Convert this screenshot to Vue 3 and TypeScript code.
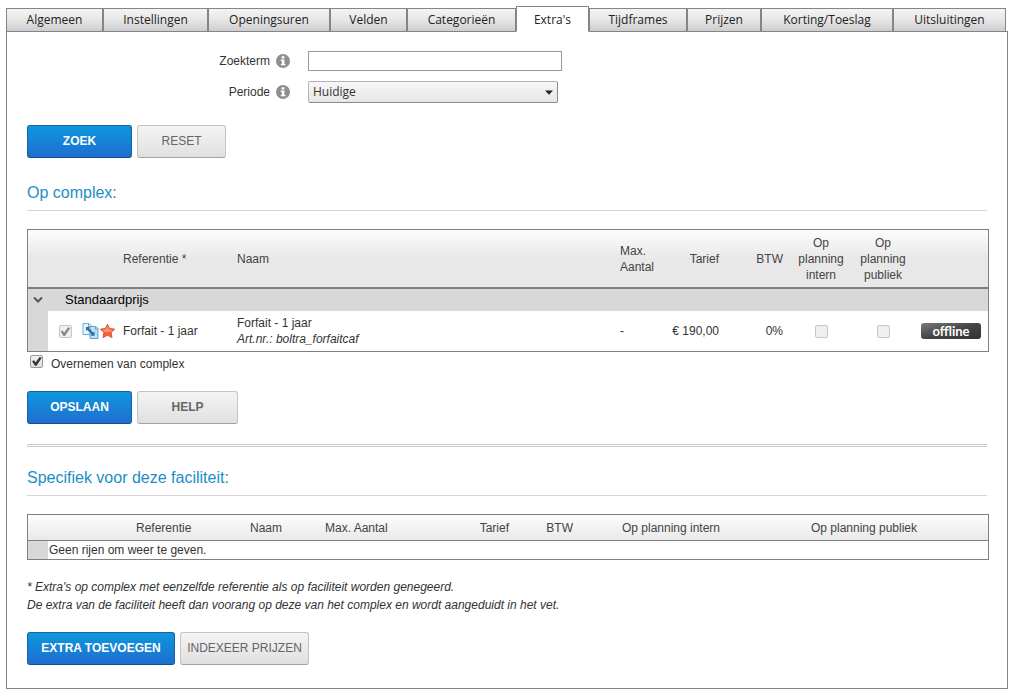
<script setup lang="ts">
import { ref } from 'vue'

interface Tab {
  id: string
  label: string
}

const tabs: Tab[] = [
  { id: 'algemeen', label: 'Algemeen' },
  { id: 'instellingen', label: 'Instellingen' },
  { id: 'openingsuren', label: 'Openingsuren' },
  { id: 'velden', label: 'Velden' },
  { id: 'categorieen', label: 'Categorieën' },
  { id: 'extras', label: "Extra's" },
  { id: 'tijdframes', label: 'Tijdframes' },
  { id: 'prijzen', label: 'Prijzen' },
  { id: 'korting', label: 'Korting/Toeslag' },
  { id: 'uitsluitingen', label: 'Uitsluitingen' },
]

const activeTab = ref<string>('extras')
const term = ref<string>('')
const period = ref<string>('Huidige')
const expanded = ref<boolean>(true)
const inherit = ref<boolean>(true)
</script>

<template>
  <div class="page">
    <nav class="tabs">
      <button
        v-for="tab in tabs"
        :key="tab.id"
        type="button"
        class="tab"
        :class="{ active: tab.id === activeTab }"
        @click="activeTab = tab.id"
      >
        {{ tab.label }}
      </button>
    </nav>

    <main class="panel">
      <form class="search" @submit.prevent>
        <div class="field">
          <label for="term">Zoekterm</label>
          <svg class="info" viewBox="0 0 14 14" aria-hidden="true">
            <circle cx="7" cy="7" r="7" fill="#8f8f8f" />
            <path d="M5.6 2.3h2.8v2.2H5.6zM4.8 5.5h3.6v4.4h1v1.4H4.8V9.9h1V6.9h-1z" fill="#fff" />
          </svg>
          <input id="term" v-model="term" class="text" type="text" />
        </div>
        <div class="field">
          <label for="period">Periode</label>
          <svg class="info" viewBox="0 0 14 14" aria-hidden="true">
            <circle cx="7" cy="7" r="7" fill="#8f8f8f" />
            <path d="M5.6 2.3h2.8v2.2H5.6zM4.8 5.5h3.6v4.4h1v1.4H4.8V9.9h1V6.9h-1z" fill="#fff" />
          </svg>
          <div class="select">
            <select id="period" v-model="period">
              <option>Huidige</option>
            </select>
            <svg class="arrow" viewBox="0 0 8 5" aria-hidden="true">
              <path d="M0 0.5h8L4 4.8z" fill="#222" />
            </svg>
          </div>
        </div>
        <div class="actions">
          <button type="submit" class="btn primary medium">ZOEK</button>
          <button type="reset" class="btn small">RESET</button>
        </div>
      </form>

      <section class="complex">
        <h2>Op complex:</h2>
        <table class="grid main-grid">
          <colgroup>
            <col class="c-gutter" />
            <col class="c-icon" />
            <col class="c-icon" />
            <col class="c-ref" />
            <col />
            <col class="c-max" />
            <col class="c-mid" />
            <col class="c-btw" />
            <col class="c-mid" />
            <col class="c-mid" />
            <col class="c-status" />
          </colgroup>
          <thead>
            <tr>
              <th></th>
              <th></th>
              <th></th>
              <th>Referentie *</th>
              <th>Naam</th>
              <th>Max. Aantal</th>
              <th class="right">Tarief</th>
              <th class="right">BTW</th>
              <th class="center">Op planning intern</th>
              <th class="center">Op planning publiek</th>
              <th></th>
            </tr>
          </thead>
          <tbody>
            <tr class="group">
              <td class="gutter">
                <button type="button" class="toggle" aria-label="Groep" @click="expanded = !expanded">
                  <svg viewBox="0 0 10 8" aria-hidden="true">
                    <path d="M1 1.5 5 5.5 9 1.5" fill="none" stroke="#555" stroke-width="2" />
                  </svg>
                </button>
              </td>
              <td colspan="10" class="group-name">Standaardprijs</td>
            </tr>
            <tr v-if="expanded" class="item">
              <td class="gutter"></td>
              <td class="center"><input type="checkbox" checked disabled aria-label="Actief" /></td>
              <td class="icons">
                <div class="icon-pair">
                  <svg viewBox="0 0 16 16" aria-hidden="true">
                    <path d="M0.5 0.5h6l2.5 2.5v8.5H0.5z" fill="#e6f3fa" stroke="#6fb0d2" />
                    <path d="M7.5 3.5h6l2 2v10h-8z" fill="#bfe0f0" stroke="#5fa2c8" />
                    <path d="M6 0.8v2.7h2.7M13 3.8v2.4h2.4" fill="none" stroke="#5fa2c8" />
                    <path d="M3.5 4h4L6.4 5.1l4.4 4.6 1.3-1.2v4.3H7.8l1.4-1.4-4.5-4.6L3.5 8z" fill="#2b70a2" />
                  </svg>
                  <svg viewBox="0 0 16 16" aria-hidden="true">
                    <path
                      d="M8 1.2 10.2 5.6l4.9.5-3.5 3.5.9 5L8 12.3l-4.5 2.3.9-5L.9 6.1l4.9-.5z"
                      fill="#f2603f"
                      stroke="#e0553a"
                      stroke-linejoin="round"
                    />
                    <path d="M8 2.8 9.6 6.4l3.6.4-2.7 2.1H5.3L2.9 6.8l3.5-.4z" fill="#fa9479" />
                  </svg>
                </div>
              </td>
              <td>Forfait - 1 jaar</td>
              <td>Forfait - 1 jaar<br /><em>Art.nr.: boltra_forfaitcaf</em></td>
              <td>-</td>
              <td class="right">€ 190,00</td>
              <td class="right">0%</td>
              <td class="center"><input type="checkbox" disabled aria-label="Op planning intern" /></td>
              <td class="center"><input type="checkbox" disabled aria-label="Op planning publiek" /></td>
              <td class="status"><button type="button" class="offline">offline</button></td>
            </tr>
          </tbody>
        </table>
        <label class="inherit">
          <input v-model="inherit" type="checkbox" />
          <span>Overnemen van complex</span>
        </label>
        <div class="actions">
          <button type="button" class="btn primary medium">OPSLAAN</button>
          <button type="button" class="btn strong help">HELP</button>
        </div>
      </section>

      <section class="specific">
        <h2>Specifiek voor deze faciliteit:</h2>
        <table class="grid empty-grid">
          <colgroup>
            <col class="c-gutter" />
            <col class="e-blank" />
            <col class="c-ref" />
            <col class="e-name" />
            <col class="e-max" />
            <col class="c-ref" />
            <col class="c-btw" />
            <col class="e-intern" />
            <col />
            <col class="e-end" />
          </colgroup>
          <thead>
            <tr>
              <th></th>
              <th></th>
              <th>Referentie</th>
              <th>Naam</th>
              <th>Max. Aantal</th>
              <th class="right">Tarief</th>
              <th class="right">BTW</th>
              <th class="center">Op planning intern</th>
              <th class="center">Op planning publiek</th>
              <th></th>
            </tr>
          </thead>
          <tbody>
            <tr>
              <td class="gutter"></td>
              <td colspan="9" class="empty">Geen rijen om weer te geven.</td>
            </tr>
          </tbody>
        </table>
        <p class="note">
          * Extra's op complex met eenzelfde referentie als op faciliteit worden genegeerd.<br />
          De extra van de faciliteit heeft dan voorang op deze van het complex en wordt aangeduidt in het vet.
        </p>
        <div class="actions">
          <button type="button" class="btn primary wide">EXTRA TOEVOEGEN</button>
          <button type="button" class="btn index">INDEXEER PRIJZEN</button>
        </div>
      </section>
    </main>
  </div>
</template>

<style>
body {
  margin: 0;
  background: #fff;
}
</style>

<style scoped>
.page {
  padding: 6px 8px 7px 6px;
  font: 12px/16px "Liberation Sans", Arial, sans-serif;
  color: #333;
}
.page * {
  box-sizing: border-box;
}
button,
input,
select {
  font: inherit;
  color: inherit;
  margin: 0;
}

.tabs {
  position: relative;
  display: grid;
  grid-template-columns: 97fr 105fr 122fr 77fr 109fr 73fr 98fr 74fr 132fr 113fr;
  align-items: end;
  height: 26px;
  margin-bottom: -1px;
  margin-right: 2px;
}
.tab {
  height: 24px;
  padding: 0;
  border: 1px solid #84858a;
  background: linear-gradient(#f4f4f4, #e6e6e6 50%, #cdcdcf);
  font: 12px/20px "Open Sans", "Noto Sans", sans-serif;
  color: #222;
  white-space: nowrap;
}
.tab.active {
  height: 26px;
  padding-top: 2px;
  border-bottom-color: #fff;
  background: #fff;
}

.panel {
  border: 1px solid #84858a;
  padding: 19px 18px 23px 20px;
}
.field {
  display: grid;
  grid-template-columns: 243px 14px 254px;
  column-gap: 6px;
  align-items: center;
  height: 20px;
}
.field + .field {
  margin-top: 10px;
}
.field label {
  text-align: right;
}
.info {
  width: 14px;
  height: 14px;
}
.text,
.select {
  margin-left: 12px;
}
.text {
  width: 254px;
  height: 20px;
  padding: 0 4px;
  border: 1px solid #9a9a9a;
  background: #fff;
}
.select {
  display: grid;
  align-items: center;
  width: 250px;
  height: 22px;
}
.select > * {
  grid-area: 1 / 1;
}
.select select {
  appearance: none;
  width: 100%;
  height: 22px;
  padding: 0 4px;
  border: 1px solid #b4b4b4;
  border-bottom-color: #888;
  border-right-color: #888;
  border-radius: 2px;
  background: linear-gradient(#f7f7f7, #e6e6e6);
  font: 12px/20px "Open Sans", "Noto Sans", sans-serif;
}
.arrow {
  width: 8px;
  height: 5px;
  justify-self: end;
  margin-right: 5px;
  pointer-events: none;
}

.actions {
  display: flex;
  gap: 5px;
}
.search .actions {
  margin-top: 24px;
}
.btn {
  height: 33px;
  padding: 0 0 2px;
  border: 1px solid #c4c4c4;
  border-bottom-color: #a2a2a2;
  border-radius: 3px;
  background: linear-gradient(#f4f4f4, #e0e0e0);
  font-size: 12px;
  color: #666;
  white-space: nowrap;
}
.btn.strong {
  font-weight: bold;
}
.btn.primary {
  border-color: #1763a4;
  border-bottom-color: #134d93;
  background: linear-gradient(#0d97dd, #1f6ed0);
  color: #fff;
  font-weight: bold;
}
.medium {
  width: 105px;
}
.small {
  width: 89px;
}
.help {
  width: 101px;
}
.wide {
  width: 148px;
}
.index {
  width: 129px;
}

h2 {
  margin: 0 2px 18px 0;
  padding-bottom: 7px;
  border-bottom: 1px solid #d6d6d6;
  font-size: 16px;
  line-height: 20px;
  font-weight: normal;
  color: #1b8ec6;
}
.complex {
  margin-top: 25px;
}

.grid {
  width: 100%;
  table-layout: fixed;
  border: 1px solid #808080;
  border-spacing: 0;
}
.grid th {
  padding: 0 7px;
  border-bottom: 1px solid #808080;
  text-align: left;
  font-weight: normal;
  color: #444;
}
.grid td {
  padding: 0 7px;
}
.grid .right {
  text-align: right;
}
.grid .center {
  text-align: center;
}
.main-grid thead {
  background: linear-gradient(#fcfcfc, #e8e8e8 50%, #e8e8e8);
}
.main-grid th {
  height: 59px;
  border-bottom-width: 2px;
}
.empty-grid thead {
  background: linear-gradient(#fdfdfd, #e8e8e8);
}
.empty-grid th {
  height: 26px;
}
.c-gutter {
  width: 20px;
}
.c-icon {
  width: 34px;
}
.c-ref {
  width: 114px;
}
.c-max {
  width: 51px;
}
.c-mid {
  width: 62px;
}
.c-btw {
  width: 64px;
}
.c-status {
  width: 74px;
}
.e-blank {
  width: 81px;
}
.e-name {
  width: 75px;
}
.e-max {
  width: 84px;
}
.e-intern {
  width: 182px;
}
.e-end {
  width: 22px;
}
.group td {
  height: 22px;
  background: #d8d8d8;
}
.grid td.group-name {
  padding-left: 17px;
  font-size: 13px;
  color: #000;
}
.grid td.gutter {
  padding: 0;
  background: #d8d8d8;
}
.toggle {
  display: flex;
  align-items: center;
  justify-content: center;
  width: 100%;
  height: 22px;
  padding: 0;
  border: 0;
  background: none;
}
.toggle svg {
  width: 10px;
  height: 8px;
}
.item td {
  height: 40px;
}
.grid td.icons {
  padding: 0;
}
.icon-pair {
  display: flex;
}
.icon-pair svg {
  width: 17px;
  height: 16px;
}
.offline {
  display: block;
  width: 60px;
  height: 16px;
  padding: 0;
  border: 0;
  border-radius: 3px;
  background: linear-gradient(165deg, #7a7a7a, #454545 50%, #333);
  font: bold 13px/14px Lato, "Open Sans", sans-serif;
  color: #fff;
}

input[type="checkbox"] {
  appearance: none;
  display: inline-block;
  width: 13px;
  height: 13px;
  border: 1px solid #999;
  border-radius: 2px;
  background: linear-gradient(#f2f2f2, #dedede);
  vertical-align: middle;
}
input[type="checkbox"]:checked::before {
  content: "";
  display: block;
  width: 11px;
  height: 11px;
  background: #333;
  clip-path: polygon(10% 48%, 28% 38%, 42% 58%, 78% 8%, 98% 16%, 50% 88%, 36% 88%);
}
input[type="checkbox"]:disabled {
  border-color: #c6c6c6;
  background: #f0f0f0;
}
input[type="checkbox"]:disabled:checked::before {
  background: #888;
}
.inherit {
  display: flex;
  gap: 8px;
  margin-top: 3px;
  padding-left: 3px;
}
.inherit span {
  line-height: 18px;
}
.complex .actions {
  margin-top: 18px;
}

.specific {
  margin-top: 20px;
}
.specific::before {
  content: "";
  display: block;
  height: 1px;
  margin: 0 2px 21px 0;
  border: solid #c8c8c8;
  border-width: 1px 0;
}
.grid td.empty {
  height: 18px;
  padding: 0 1px;
}
.note {
  margin: 18px 0;
  font-style: italic;
  line-height: 18px;
}
</style>
